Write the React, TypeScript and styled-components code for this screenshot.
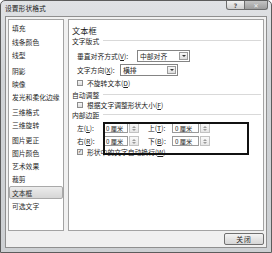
import React from "react";
import styled, { createGlobalStyle } from "styled-components";

const Global = createGlobalStyle`
  html, body { margin: 0; padding: 0; background: #ffffff; }
  body { font-family: "Noto Sans CJK SC", "Liberation Sans", sans-serif; color: #222; }
  * { box-sizing: border-box; }
`;

const FS = "6.8px";

const Window = styled.div`
  width: 272px;
  height: 253px;
  border: 1px solid #5c5c5c;
  border-radius: 5px 5px 0 0;
  background: linear-gradient(#e0e2e5, #d0d3d6 30%, #cdd0d3);
  display: flex;
  flex-direction: column;
`;

const TitleBar = styled.div`
  height: 15px;
  display: flex;
  align-items: flex-start;
  padding-left: 4px;
`;

const TitleText = styled.span`
  font-size: ${FS};
  line-height: 15px;
  color: #1a1a1a;
`;

const Caption = styled.div`
  margin-left: auto;
  margin-right: 3px;
  display: flex;
`;

const CapButton = styled.div<{ $w: number; $dark?: boolean }>`
  width: ${(p) => p.$w}px;
  height: 9px;
  border: 1px solid #6d6d6d;
  border-top: none;
  background: ${(p) =>
    p.$dark
      ? "linear-gradient(#c4c4c4, #9c9c9c)"
      : "linear-gradient(#f2f2f2, #cfcfcf)"};
  border-radius: ${(p) => (p.$dark ? "0 0 3px 0" : "0 0 0 3px")};
  display: flex;
  align-items: center;
  justify-content: center;
  font-family: "DejaVu Sans", sans-serif;
  font-size: 6px;
  font-weight: bold;
  color: ${(p) => (p.$dark ? "#f4f4f4" : "#555")};
  & + & { border-left: none; }
`;

const Body = styled.div`
  flex: 1;
  margin: 0 4px 4px 4px;
  background: #f0f0f0;
  border: 1px solid #8f8f8f;
  padding: 2px;
  display: flex;
  flex-direction: column;
  gap: 2px;
`;

const Main = styled.div`
  flex: 1;
  display: flex;
  gap: 4px;
`;

const List = styled.div`
  width: 56px;
  background: #ffffff;
  border: 1px solid #a3a3a3;
  padding-top: 1px;
  display: flex;
  flex-direction: column;
`;

const Item = styled.div<{ $gap?: number; $selected?: boolean }>`
  height: 13px;
  line-height: 12px;
  margin-top: ${(p) => p.$gap || 0}px;
  padding-left: 2px;
  font-size: ${FS};
  color: #2a2a2a;
  white-space: nowrap;
  border: 1px solid ${(p) => (p.$selected ? "#a9a9a9" : "transparent")};
  border-radius: 2px;
  background: ${(p) =>
    p.$selected ? "linear-gradient(#ececec, #d6d6d6)" : "transparent"};
`;

const Panel = styled.div`
  position: relative;
  flex: 1;
  background: #ffffff;
  border: 1px solid #a3a3a3;
  padding: 0 2px 0 3px;
  display: flex;
  flex-direction: column;
`;

const Heading = styled.div`
  margin-top: 5px;
  font-size: 8.2px;
  line-height: 10px;
  color: #1e1e1e;
`;

const Section = styled.div<{ $mt: number }>`
  margin-top: ${(p) => p.$mt}px;
  height: 9px;
  display: flex;
  align-items: center;
  font-size: ${FS};
  color: #222;
  &::after {
    content: "";
    flex: 1;
    height: 1px;
    margin-left: 4px;
    background: #d9d9d9;
  }
`;

const Row = styled.div<{ $mt: number; $h?: number }>`
  margin-top: ${(p) => p.$mt}px;
  height: ${(p) => p.$h || 9}px;
  padding-left: 5px;
  display: flex;
  align-items: center;
  font-size: ${FS};
  color: #222;
  white-space: nowrap;
`;

const Label = styled.span<{ $w?: number; $ml?: number }>`
  display: inline-block;
  width: ${(p) => (p.$w ? `${p.$w}px` : "auto")};
  margin-left: ${(p) => p.$ml || 0}px;
  flex-shrink: 0;
`;

const Select = styled.div<{ $w: number }>`
  width: ${(p) => p.$w}px;
  height: 12px;
  border: 1px solid #848484;
  background: #fff;
  display: flex;
  align-items: center;
  padding-left: 2px;
  font-size: ${FS};
  flex-shrink: 0;
`;

const SelectArrow = styled.div`
  margin-left: auto;
  margin-right: 1px;
  width: 9px;
  height: 8px;
  border: 1px solid #9b9b9b;
  background: linear-gradient(#f7f7f7, #dedede);
  display: flex;
  align-items: center;
  justify-content: center;
  &::before {
    content: "";
    border-left: 2px solid transparent;
    border-right: 2px solid transparent;
    border-top: 2px solid #333;
  }
`;

const Box = styled.span`
  width: 6px;
  height: 6px;
  border: 1px solid #8d8d8d;
  background: linear-gradient(#f6f6f6, #dddddd);
  margin-right: 4px;
  flex-shrink: 0;
  display: flex;
  align-items: center;
  justify-content: center;
  font-family: "DejaVu Sans", sans-serif;
  font-size: 5px;
  line-height: 1;
  color: #333;
`;

const SpinInput = styled.div<{ $w: number }>`
  width: ${(p) => p.$w}px;
  height: 10px;
  border: 1px solid #9a9a9a;
  background: #fff;
  padding-left: 2px;
  display: flex;
  align-items: center;
  font-size: 6.2px;
  flex-shrink: 0;
`;

const Spinner = styled.div`
  width: 10px;
  height: 10px;
  margin-left: 1px;
  border: 1px solid #c2c2c2;
  background: linear-gradient(#fafafa, #e6e6e6);
  display: flex;
  flex-direction: column;
  align-items: center;
  justify-content: center;
  gap: 1px;
  flex-shrink: 0;
`;

const Tri = styled.span<{ $down?: boolean }>`
  border-left: 2px solid transparent;
  border-right: 2px solid transparent;
  ${(p) =>
    p.$down ? "border-top: 2px solid #9a9a9a;" : "border-bottom: 2px solid #9a9a9a;"}
`;

const Annotation = styled.div`
  position: absolute;
  left: 34px;
  top: 102px;
  width: 146px;
  height: 33px;
  border: 2px solid #111;
  pointer-events: none;
`;

const Footer = styled.div`
  height: 12px;
  display: flex;
  justify-content: flex-end;
`;

const Button = styled.div`
  width: 40px;
  height: 12px;
  border: 1px solid #707070;
  border-radius: 2px;
  background: linear-gradient(#f4f4f4, #e4e4e4 50%, #d6d6d6);
  display: flex;
  align-items: center;
  justify-content: center;
  font-size: ${FS};
  color: #222;
  letter-spacing: 1px;
`;

const items: { t: string; gap?: number; sel?: boolean }[] = [
  { t: "填充" },
  { t: "线条颜色", gap: 1 },
  { t: "线型" },
  { t: "阴影", gap: 3 },
  { t: "映像" },
  { t: "发光和柔化边缘" },
  { t: "三维格式", gap: 2 },
  { t: "三维旋转" },
  { t: "图片更正", gap: 2 },
  { t: "图片颜色" },
  { t: "艺术效果" },
  { t: "裁剪" },
  { t: "文本框", gap: 1, sel: true },
  { t: "可选文字" },
];

const Spin = ({ w }: { w: number }) => (
  <>
    <SpinInput $w={w}>0 厘米</SpinInput>
    <Spinner>
      <Tri />
      <Tri $down />
    </Spinner>
  </>
);

export default function App() {
  return (
    <>
      <Global />
      <Window>
        <TitleBar>
          <TitleText>设置形状格式</TitleText>
          <Caption>
            <CapButton $w={19}>?</CapButton>
            <CapButton $w={23} $dark>
              ✕
            </CapButton>
          </Caption>
        </TitleBar>
        <Body>
          <Main>
            <List>
              {items.map((it) => (
                <Item key={it.t} $gap={it.gap} $selected={it.sel}>
                  {it.t}
                </Item>
              ))}
            </List>
            <Panel>
              <Heading>文本框</Heading>
              <Section $mt={1}>文字版式</Section>
              <Row $mt={5} $h={12}>
                <Label $w={60}>
                  垂直对齐方式(<u>V</u>):
                </Label>
                <Select $w={53}>
                  中部对齐
                  <SelectArrow />
                </Select>
              </Row>
              <Row $mt={2} $h={12}>
                <Label $w={43}>
                  文字方向(<u>X</u>):
                </Label>
                <Select $w={58}>
                  横排
                  <SelectArrow />
                </Select>
              </Row>
              <Row $mt={2}>
                <Box />
                不旋转文本(<u>D</u>)
              </Row>
              <Section $mt={3}>自动调整</Section>
              <Row $mt={1}>
                <Box />
                根据文字调整形状大小(<u>F</u>)
              </Row>
              <Section $mt={1}>内部边距</Section>
              <Row $mt={4} $h={10}>
                <Label $w={26}>
                  左(<u>L</u>):
                </Label>
                <Spin w={25} />
                <Label $w={24} $ml={9}>
                  上(<u>T</u>):
                </Label>
                <Spin w={27} />
              </Row>
              <Row $mt={3} $h={10}>
                <Label $w={26}>
                  右(<u>R</u>):
                </Label>
                <Spin w={25} />
                <Label $w={24} $ml={9}>
                  下(<u>B</u>):
                </Label>
                <Spin w={27} />
              </Row>
              <Row $mt={1}>
                <Box>✓</Box>
                形状中的文字自动换行(<u>W</u>)
              </Row>
              <Annotation />
            </Panel>
          </Main>
          <Footer>
            <Button>关闭</Button>
          </Footer>
        </Body>
      </Window>
    </>
  );
}
